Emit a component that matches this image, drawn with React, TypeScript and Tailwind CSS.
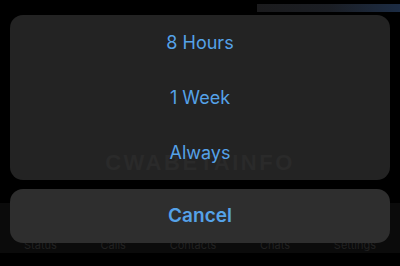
const tabs = ['Status', 'Calls', 'Contacts', 'Chats', 'Settings'];
const options = ['8 Hours', '1 Week', 'Always'];

export default function App() {
  return (
    <div className="relative h-[266px] w-[400px] overflow-hidden bg-black font-['Inter','Noto_Sans',sans-serif]">
      {/* background screen under the action sheet */}
      <div className="flex h-full flex-col">
        <div className="ml-[257px] mt-[4px] h-[8px] bg-gradient-to-r from-[#1b1b1d] via-[#1b1e24] to-[#1c2c44]" />
        <div className="flex-1" />
        <div className="flex h-[50px] items-end justify-between bg-[#0b0b0b] px-[24px] text-[11px] leading-[16px] text-[#222222]">
          {tabs.map((t) => (
            <span key={t}>{t}</span>
          ))}
        </div>
        <div className="h-[13px]" />
      </div>

      {/* action sheet */}
      <div className="absolute inset-0 flex flex-col gap-[9px] px-[10px] pt-[15px]">
        <div className="relative flex h-[165px] flex-col rounded-[13px] bg-[#232323]">
          <div className="pointer-events-none absolute left-0 right-0 top-[137px] flex justify-center font-['Liberation_Sans',sans-serif] text-[22px] font-bold leading-none tracking-[2.5px] text-[#2a2a2a]">
            CWABETAINFO
          </div>
          {options.map((o) => (
            <button
              key={o}
              className="relative flex h-[55px] items-center justify-center text-[18px] text-[#55a2e8]"
            >
              {o}
            </button>
          ))}
        </div>
        <button className="flex h-[54px] items-center justify-center rounded-[13px] bg-[#2e2e2e] text-[19px] font-semibold text-[#55a2e8]">
          Cancel
        </button>
      </div>
    </div>
  );
}
